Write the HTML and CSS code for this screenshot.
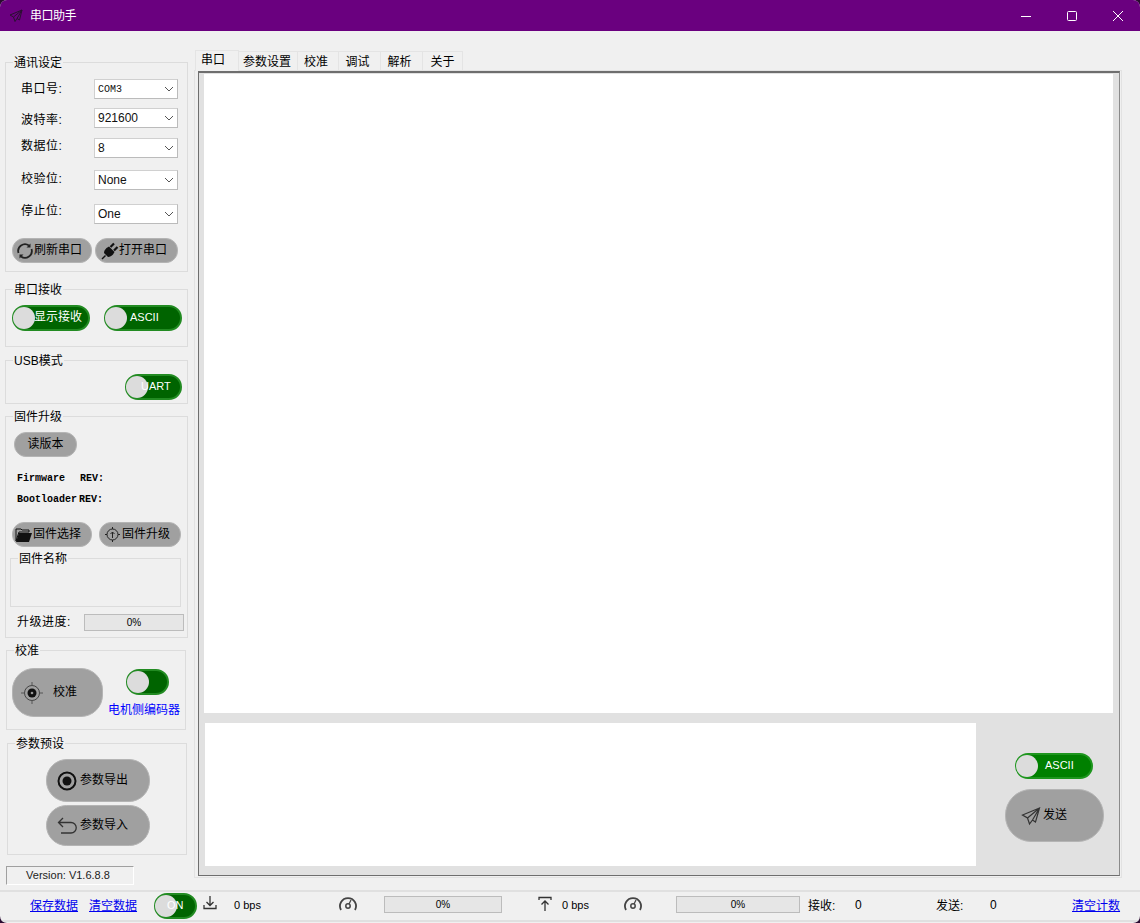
FILE: index.html
```html
<!DOCTYPE html>
<html lang="zh-CN">
<head>
  <meta charset="UTF-8" />
  <title>串口助手</title>
  <link rel="stylesheet" href="styles.css">
</head>
<body>
<div class="window">

  <!-- Title bar -->
  <div class="titlebar">
    <svg class="app-icon" width="14" height="14" viewBox="0 0 14 14"><path d="M13 1 1 6l3.500 2L6 12.500l2-3 2.500 1.500zM13 1 4.500 8M13 1 8 9.500" fill="none" stroke="#2a1030" stroke-width="1"/></svg>
    <span class="app-title">串口助手</span>
    <div class="winbtns">
      <svg class="winbtn" width="12" height="12" viewBox="0 0 12 12"><path d="M1 6.500h10" stroke="#fff" fill="none"/></svg>
      <svg class="winbtn" width="12" height="12" viewBox="0 0 12 12"><rect x="1.500" y="1.500" width="9" height="9" rx="1" stroke="#fff" fill="none"/></svg>
      <svg class="winbtn" width="12" height="12" viewBox="0 0 12 12"><path d="M1 1l10 10M11 1 1 11" stroke="#fff" fill="none"/></svg>
    </div>
  </div>

  <div class="content">
    <!-- Left side -->
    <div class="sidebar">

      <fieldset class="group g-comm">
        <legend>通讯设定</legend>
        <div class="field f1"><label>串口号:</label><div class="combo combo-mono">COM3<svg width="10" height="6" viewBox="0 0 10 6"><path d="M1 1l4 4 4-4" fill="none" stroke="#555"/></svg></div></div>
        <div class="field f2"><label>波特率:</label><div class="combo">921600<svg width="10" height="6" viewBox="0 0 10 6"><path d="M1 1l4 4 4-4" fill="none" stroke="#555"/></svg></div></div>
        <div class="field f3"><label>数据位:</label><div class="combo">8<svg width="10" height="6" viewBox="0 0 10 6"><path d="M1 1l4 4 4-4" fill="none" stroke="#555"/></svg></div></div>
        <div class="field f4"><label>校验位:</label><div class="combo">None<svg width="10" height="6" viewBox="0 0 10 6"><path d="M1 1l4 4 4-4" fill="none" stroke="#555"/></svg></div></div>
        <div class="field f5"><label>停止位:</label><div class="combo">One<svg width="10" height="6" viewBox="0 0 10 6"><path d="M1 1l4 4 4-4" fill="none" stroke="#555"/></svg></div></div>
        <div class="btn-row comm-btns">
          <button class="btn b-refresh"><svg width="18" height="18" viewBox="0 0 18 18"><path d="M2.500 11A6.800 6.800 0 0 1 13 3.500M15.500 7a6.800 6.800 0 0 1-10.500 7.500" fill="none" stroke="#222" stroke-width="1.800"/><path d="M14.500 1.500v4h-4zM3.500 16.500v-4h4z" fill="#222"/></svg>刷新串口</button>
          <button class="btn b-open"><svg width="18" height="18" viewBox="0 0 18 18"><path d="M1 17l3.500-3.500" stroke="#111" stroke-width="1.500"/><path d="M3 11c0-2 1-3.500 2.500-5L8 4.500l5.500 5.500-1.500 2.500c-1.500 1.500-3 2.500-5 2.500z" fill="#111"/><path d="M9.500 5 13 1.500M13 8.500 16.500 5" stroke="#111" stroke-width="2.200"/></svg>打开串口</button>
        </div>
      </fieldset>

      <fieldset class="group g-recv">
        <legend>串口接收</legend>
        <div class="recv-row">
          <div class="toggle t-show"><span class="knob"></span><span class="tg-text">显示接收</span></div>
          <div class="toggle t-ascii"><span class="knob"></span><span class="tg-text tg-small">ASCII</span></div>
        </div>
      </fieldset>

      <fieldset class="group g-usb">
        <legend>USB模式</legend>
        <div class="toggle t-uart"><span class="knob"></span><span class="tg-text tg-small">UART</span></div>
      </fieldset>

      <fieldset class="group g-fw">
        <legend>固件升级</legend>
        <button class="btn b-read">读版本</button>
        <div class="rev rev1"><span>Firmware</span><span>REV:</span></div>
        <div class="rev rev2"><span>Bootloader</span><span>REV:</span></div>
        <div class="btn-row fw-btns">
          <button class="btn b-select"><svg width="18" height="16" viewBox="0 0 18 16"><path d="M1 4V2h5l1 1h7v2H4L1 14z" fill="none" stroke="#111"/><path d="M4 6h13l-3 9H1z" fill="#111"/></svg>固件选择</button>
          <button class="btn b-upgrade"><svg width="15" height="15" viewBox="0 0 15 15"><circle cx="7.500" cy="7.500" r="5.500" fill="none" stroke="#222"/><path d="M7.500 11V5M5.500 7l2-2 2 2M7.500 0v2M7.500 13v2M0 7.500h2M13 7.500h2" fill="none" stroke="#222"/></svg>固件升级</button>
        </div>
        <fieldset class="group g-name"><legend>固件名称</legend></fieldset>
        <div class="fw-progress"><label>升级进度:</label><div class="bar bar-fw">0%</div></div>
      </fieldset>

      <fieldset class="group g-cal">
        <legend>校准</legend>
        <div class="cal-row">
          <button class="btn b-cal"><svg width="24" height="24" viewBox="0 0 24 24"><circle cx="12" cy="12" r="7.500" fill="none" stroke="#444"/><circle cx="12" cy="12" r="4.500" fill="#111"/><circle cx="12" cy="12" r="1.300" fill="#999"/><path d="M12 1v4M12 19v4M1 12h4M19 12h4" stroke="#555"/></svg>校准</button>
          <div class="cal-right">
            <div class="toggle t-motor"><span class="knob"></span></div>
            <div class="motor-label">电机侧编码器</div>
          </div>
        </div>
      </fieldset>

      <fieldset class="group g-preset">
        <legend>参数预设</legend>
        <button class="btn b-preset"><svg width="20" height="20" viewBox="0 0 20 20"><circle cx="10" cy="10" r="8.500" fill="none" stroke="#111" stroke-width="2"/><circle cx="10" cy="10" r="4.500" fill="#111"/></svg>参数导出</button>
        <button class="btn b-preset b-import"><svg width="20" height="20" viewBox="0 0 20 20"><path d="M6 2 1.500 6.500 6 11M2 6.500h12a4.500 4.500 0 0 1 0 10.500H4" fill="none" stroke="#333" stroke-width="1.300"/></svg>参数导入</button>
      </fieldset>

      <div class="version">Version: V1.6.8.8</div>
    </div>

    <!-- Right side -->
    <div class="main">
      <div class="tabs">
        <div class="tab active tab-a">串口</div>
        <div class="tab tab-b">参数设置</div>
        <div class="tab tab-c">校准</div>
        <div class="tab tab-d">调试</div>
        <div class="tab tab-e">解析</div>
        <div class="tab tab-f">关于</div>
      </div>
      <div class="pane">
        <div class="pane-inner">
          <div class="recv-box"></div>
          <div class="send-row">
            <div class="send-box"></div>
            <div class="send-side">
              <div class="toggle t-send"><span class="knob"></span><span class="tg-text tg-small">ASCII</span></div>
              <button class="btn b-send"><svg width="20" height="20" viewBox="0 0 20 20"><path d="M18.500 2 1.500 9l5 3 2 6 3-4 3 2zM18.500 2 6.500 12M18.500 2 11.500 14" fill="none" stroke="#333" stroke-width="1.200"/></svg>发送</button>
            </div>
          </div>
        </div>
      </div>
    </div>
  </div>

  <!-- Status bar -->
  <div class="statusbar">
    <a class="s-save">保存数据</a>
    <a class="s-clear">清空数据</a>
    <div class="toggle t-on"><span class="knob"></span><span class="tg-text tg-small">ON</span></div>
    <svg class="s-down" width="14" height="16" viewBox="0 0 14 16"><path d="M7 1v9M3.500 7 7 10.500 10.500 7M1 10v3.500h12V10" fill="none" stroke="#333" stroke-width="1.300"/></svg>
    <span class="s-bps1">0 bps</span>
    <svg class="s-gauge1" width="20" height="16" viewBox="0 0 20 16"><path d="M3 15A8 8 0 1 1 17 15" fill="none" stroke="#444" stroke-width="1.800"/><circle cx="10" cy="11" r="2.200" fill="none" stroke="#444" stroke-width="1.500"/><path d="M11 9l2-4" stroke="#444" stroke-width="1.300"/></svg>
    <div class="bar bar-a">0%</div>
    <svg class="s-up" width="14" height="16" viewBox="0 0 14 16"><path d="M1 4V1.500h12V4M7 15V5M3.500 8.500 7 5l3.500 3.500" fill="none" stroke="#333" stroke-width="1.300"/></svg>
    <span class="s-bps2">0 bps</span>
    <svg class="s-gauge2" width="20" height="16" viewBox="0 0 20 16"><path d="M3 15A8 8 0 1 1 17 15" fill="none" stroke="#444" stroke-width="1.800"/><circle cx="10" cy="11" r="2.200" fill="none" stroke="#444" stroke-width="1.500"/><path d="M11 9l2-4" stroke="#444" stroke-width="1.300"/></svg>
    <div class="bar bar-b">0%</div>
    <span class="s-rx">接收:</span>
    <span class="s-rxn">0</span>
    <span class="s-tx">发送:</span>
    <span class="s-txn">0</span>
    <a class="s-count">清空计数</a>
  </div>
</div>
</body>
</html>
```

FILE: styles.css
```css
* {
  box-sizing: border-box;
}
body {
  margin: 0;
  background: #2a0a30;
  font-family: "Liberation Sans", "Noto Sans CJK SC", sans-serif;
  font-size: 12px;
  color: #000;
}
.window {
  width: 1140px;
  height: 923px;
  background: #f0f0f0;
  display: flex;
  flex-direction: column;
  border-radius: 7px;
  overflow: hidden;
}

/* title bar */
.titlebar {
  height: 31px;
  background: #6a007f;
  color: #fff;
  display: flex;
  align-items: center;
  flex: none;
}
.app-icon {
  margin-left: 9px;
}
.app-title {
  margin-left: 7px;
  line-height: 1;
  letter-spacing: -0.5px;
}
.winbtns {
  margin-left: auto;
  display: flex;
  gap: 34px;
  padding-right: 16px;
}

.content {
  flex: 1;
  display: flex;
  min-height: 0;
}

/* sidebar */
.sidebar {
  width: 194px;
  flex: none;
  padding: 23px 0 0 5px;
  display: flex;
  flex-direction: column;
  align-items: flex-start;
}
.group {
  margin: 0;
  padding: 0;
  border: 1px solid #dcdcdc;
  min-width: 0;
  display: block;
}
.group legend {
  margin-left: 7px;
  padding: 0 1px;
  line-height: 18px;
  height: 16px;
}
.g-comm {
  width: 183px;
  height: 218px;
}
.g-recv {
  width: 183px;
  height: 66px;
  margin-top: 9px;
}
.g-usb {
  width: 183px;
  height: 52px;
  margin-top: 5px;
}
.g-fw {
  width: 183px;
  height: 230px;
  margin-top: 4px;
}
.g-cal {
  width: 180px;
  height: 88px;
  margin: 4px 0 0 1px;
}
.g-preset {
  width: 180px;
  height: 120px;
  margin: 5px 0 0 2px;
}

.field {
  display: flex;
  align-items: center;
  padding-left: 15px;
}
.field label {
  width: 73px;
  flex: none;
  letter-spacing: 0.5px;
}
.f1 {
  margin-top: 9px;
}
.f1 label {
  margin-top: -3px;
}
.f2 {
  margin-top: 9px;
}
.f3 {
  margin-top: 10px;
}
.f3 label {
  margin-top: -8px;
}
.f4 {
  margin-top: 12px;
}
.f4 label {
  margin-top: -6px;
}
.f5 {
  margin-top: 14px;
}
.f5 label {
  margin-top: -10px;
}
.combo {
  width: 84px;
  height: 20px;
  background: #fff;
  border: 1px solid #d0d0d0;
  border-bottom-color: #bbb;
  border-right-color: #bbb;
  display: flex;
  align-items: center;
  justify-content: space-between;
  padding: 0 3px;
  color: #111;
}
.combo-mono {
  font-family: "Liberation Mono", monospace;
  font-size: 10px;
}

.btn {
  font: inherit;
  color: #000;
  background: #a0a0a0;
  border: 1px solid #b4b4b4;
  border-radius: 12px;
  padding: 0 0 5px;
  display: flex;
  align-items: center;
  justify-content: flex-start;
}
.btn svg {
  margin-top: 5px;
  flex: none;
}
.btn-row {
  display: flex;
}
.comm-btns {
  margin: 14px 0 0 6px;
  gap: 3px;
}
.b-refresh {
  width: 80px;
  height: 25px;
  padding-left: 3px;
}
.b-open {
  width: 83px;
  height: 25px;
  padding-left: 5px;
}

/* toggles */
.toggle {
  position: relative;
  height: 26px;
  background: #006400;
  border: 2px solid #228b22;
  border-radius: 13px;
  color: #fff;
}
.knob {
  position: absolute;
  left: -1px;
  top: 0;
  width: 22px;
  height: 22px;
  border-radius: 50%;
  background: #dcdcdc;
}
.tg-text {
  position: absolute;
  top: 0;
  line-height: 21px;
  white-space: nowrap;
}
.tg-small {
  font-size: 11px;
}
.recv-row {
  display: flex;
  gap: 14px;
  padding: 8px 0 0 6px;
}
.t-show {
  width: 78px;
}
.t-show .tg-text {
  left: 20px;
}
.t-ascii {
  width: 78px;
}
.t-ascii .tg-text {
  left: 24px;
}
.t-uart {
  width: 57px;
  margin: 6px 0 0 119px;
}
.t-uart .tg-text {
  left: 14px;
}

/* firmware */
.b-read {
  width: 63px;
  height: 25px;
  margin: 8px 0 0 8px;
  justify-content: center;
}
.rev {
  font-family: "Liberation Mono", monospace;
  font-weight: bold;
  font-size: 10px;
  line-height: 12px;
  display: flex;
  padding-left: 11px;
}
.rev span:first-child {
  width: 63px;
}
.rev1 {
  margin-top: 16px;
}
.rev2 {
  margin-top: 9px;
}
.rev2 span:first-child {
  width: 62px;
}
.fw-btns {
  margin: 16px 0 0 6px;
  gap: 7px;
}
.b-select {
  width: 80px;
  height: 25px;
  padding-left: 2px;
}
.b-upgrade {
  width: 82px;
  height: 25px;
  padding-left: 5px;
}
.b-upgrade svg {
  margin-right: 2px;
}
.g-name {
  width: 171px;
  height: 57px;
  margin: 3px 0 0 4px;
}
.fw-progress {
  display: flex;
  align-items: center;
  margin-top: 7px;
  padding-left: 11px;
}
.fw-progress label {
  width: 67px;
  flex: none;
  margin-top: -4px;
  letter-spacing: 0.5px;
}
.bar {
  height: 17px;
  background: #e6e6e6;
  border: 1px solid #bcbcbc;
  text-align: center;
  line-height: 15px;
  font-size: 10px;
  flex: none;
}
.bar-fw {
  width: 100px;
}

/* calibration */
.cal-row {
  display: flex;
}
.b-cal {
  width: 91px;
  height: 49px;
  margin: 10px 0 0 5px;
  border-radius: 22px;
  gap: 9px;
  padding-left: 7px;
}
.cal-right {
  margin: 11px 0 0 5px;
}
.t-motor {
  width: 43px;
  margin-left: 18px;
}
.motor-label {
  color: #0000ff;
  line-height: 16px;
  margin-top: 7px;
  padding-right: 4px;
  background: #f0f0f0;
  white-space: nowrap;
  position: relative;
}

/* presets */
.b-preset {
  width: 104px;
  height: 43px;
  margin: 8px 0 0 38px;
  border-radius: 21px;
  gap: 3px;
  padding-left: 10px;
}
.b-import {
  height: 41px;
  margin-top: 3px;
}
.version {
  width: 128px;
  height: 19px;
  margin: 11px 0 0 1px;
  border: 1px solid;
  border-color: #a0a0a0 #fff #fff #a0a0a0;
  padding-right: 4px;
  text-align: center;
  line-height: 17px;
  font-size: 11px;
  color: #222;
}

/* tabs */
.main {
  flex: 1;
  padding-top: 18px;
  min-width: 0;
}
.tabs {
  display: flex;
  height: 21px;
  align-items: flex-end;
  margin-left: 1px;
  position: relative;
  z-index: 1;
}
.tab {
  height: 19px;
  background: #f0f0f0;
  border: 1px solid #e4e4e4;
  border-bottom: 0;
  border-left: 0;
  text-align: center;
  line-height: 21px;
}
.tab.active {
  height: 21px;
  line-height: 19px;
  border-left: 1px solid #e4e4e4;
  margin-bottom: -1px;
  padding-right: 8px;
}
.tab-a {
  width: 44px;
}
.tab-b {
  width: 59px;
  padding-right: 2px;
}
.tab-c {
  width: 41px;
  padding-right: 4px;
}
.tab-d {
  width: 42px;
  padding-right: 4px;
}
.tab-e {
  width: 42px;
  padding-right: 4px;
}
.tab-f {
  width: 40px;
}
.pane {
  width: 928px;
  height: 808px;
  border: 1px solid #e2e2e2;
  padding: 0 1px 1px 3px;
}
.pane-inner {
  width: 922px;
  height: 805px;
  background: #e1e1e1;
  border: 1px solid;
  border-color: #6e6e6e #8a8a8a #6e6e6e #6e6e6e;
  border-top-width: 2px;
  padding: 1px 0 0 5px;
}
.recv-box {
  width: 909px;
  height: 639px;
  background: #fff;
}
.send-row {
  display: flex;
  margin-top: 10px;
}
.send-box {
  width: 771px;
  height: 143px;
  margin-left: 1px;
  background: #fff;
}
.send-side {
  margin-left: 29px;
  padding-top: 30px;
}
.t-send {
  width: 78px;
  margin-left: 10px;
  background: #008000;
  border-color: #1e961e;
}
.t-send .tg-text {
  left: 28px;
}
.b-send {
  width: 99px;
  height: 53px;
  margin-top: 10px;
  border-radius: 26px;
  gap: 2px;
  padding-left: 15px;
}

/* status bar */
.statusbar {
  height: 32px;
  flex: none;
  margin-bottom: 1px;
  border-top: 2px solid #e0e0e0;
  border-bottom: 2px solid #e0e0e0;
  padding-bottom: 3px;
  display: flex;
  align-items: center;
  white-space: nowrap;
}
.statusbar a {
  color: #0000ee;
  text-decoration: underline;
  flex: none;
}
.statusbar svg {
  flex: none;
}
.s-save {
  margin-left: 30px;
}
.s-clear {
  margin-left: 11px;
}
.t-on {
  width: 43px;
  margin: 3px 0 0 17px;
}
.t-on .tg-text {
  left: 11px;
}
.s-down {
  margin: -4px 0 0 6px;
}
.s-bps1 {
  margin-left: 17px;
  width: 26px;
  font-size: 11px;
}
.s-gauge1 {
  margin: -4px 0 0 78px;
}
.bar-a {
  width: 118px;
  margin: -1px 0 0 26px;
}
.s-up {
  margin: -2px 0 0 36px;
}
.s-bps2 {
  margin-left: 10px;
  width: 27px;
  font-size: 11px;
}
.s-gauge2 {
  margin: -4px 0 0 34px;
}
.bar-b {
  width: 124px;
  margin: -1px 0 0 33px;
}
.s-rx {
  margin-left: 8px;
  width: 47px;
}
.s-rxn {
  width: 81px;
}
.s-tx {
  width: 54px;
}
.s-txn {
  width: 82px;
}
```
